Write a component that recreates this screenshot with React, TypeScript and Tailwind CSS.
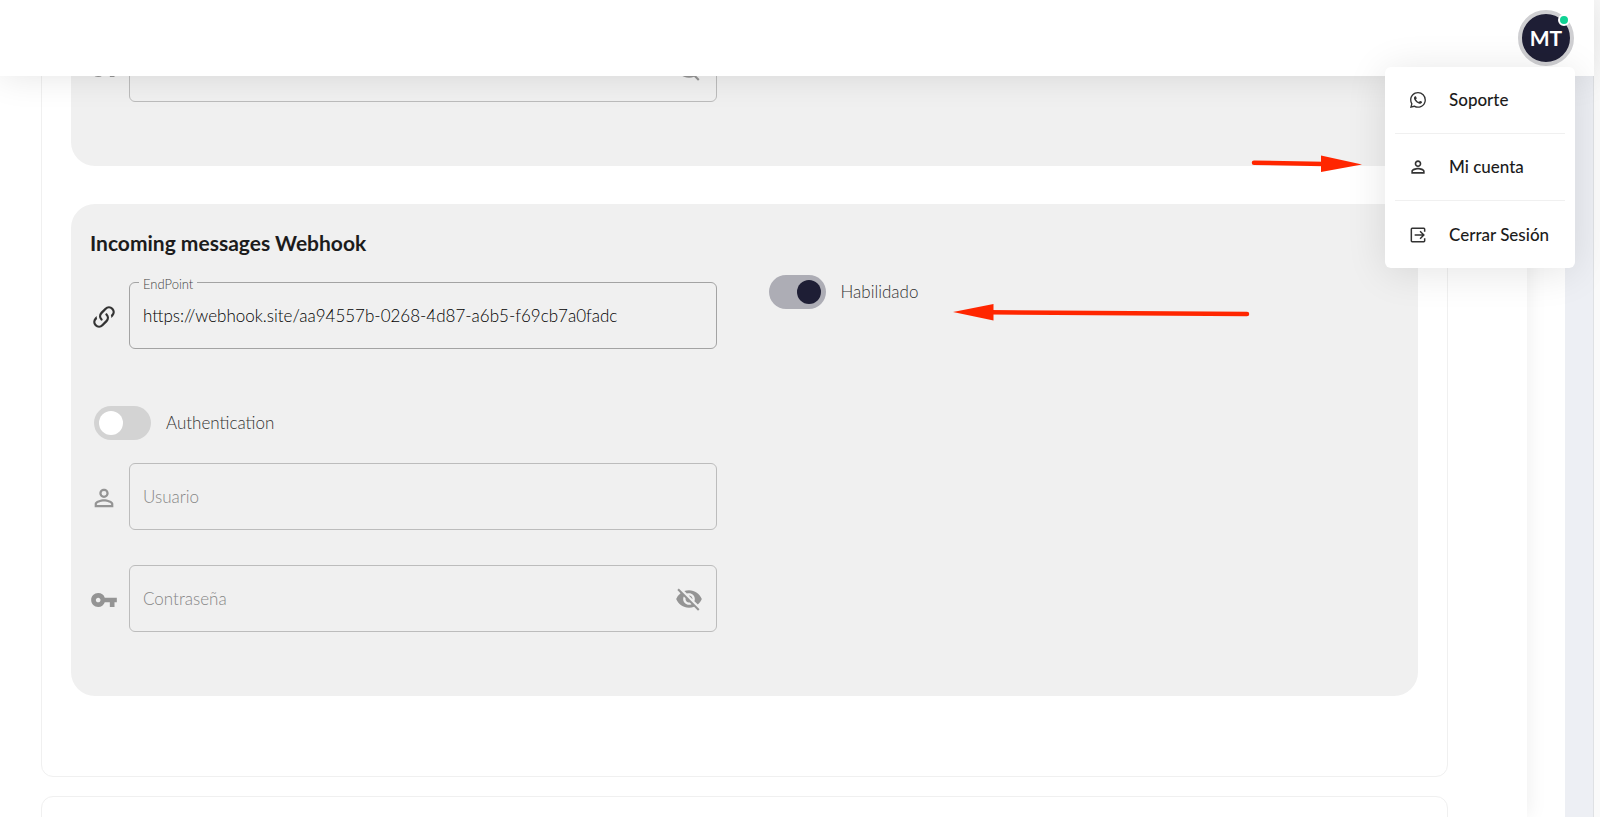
import React, { useState } from 'react';
import { BsWhatsapp } from 'react-icons/bs';
import { MdPersonOutline, MdVisibilityOff, MdVpnKey } from 'react-icons/md';

function LinkIcon({ className }: { className?: string }) {
  return (
    <svg viewBox="0 0 24 24" fill="currentColor" className={className} aria-hidden="true">
      <path d="M10.59 13.41c.41.39.41 1.03 0 1.42-.39.39-1.03.39-1.42 0a5.003 5.003 0 0 1 0-7.07l3.54-3.54a5.003 5.003 0 0 1 7.07 0 5.003 5.003 0 0 1 0 7.07l-1.49 1.49c.01-.82-.12-1.64-.4-2.42l.47-.48a2.982 2.982 0 0 0 0-4.24 2.982 2.982 0 0 0-4.24 0l-3.53 3.53a2.982 2.982 0 0 0 0 4.24m2.82-4.24c.39-.39 1.03-.39 1.42 0a5.003 5.003 0 0 1 0 7.07l-3.54 3.54a5.003 5.003 0 0 1-7.07 0 5.003 5.003 0 0 1 0-7.07l1.49-1.49c-.01.82.12 1.64.4 2.43l-.47.47a2.982 2.982 0 0 0 0 4.24 2.982 2.982 0 0 0 4.24 0l3.53-3.53a2.982 2.982 0 0 0 0-4.24.973.973 0 0 1 0-1.42Z" />
    </svg>
  );
}

function ExitIcon({ className }: { className?: string }) {
  return (
    <svg viewBox="0 0 24 24" fill="none" stroke="currentColor" strokeWidth="1.8" className={className} aria-hidden="true">
      <path d="M20 8V5a1 1 0 0 0-1-1H5a1 1 0 0 0-1 1v14a1 1 0 0 0 1 1h14a1 1 0 0 0 1-1v-3" />
      <path d="M8 12h11M14.500 7.500l4.500 4.500-4.500 4.500" />
    </svg>
  );
}

const MENU = [
  { label: 'Soporte', icon: <BsWhatsapp className="size-4" /> },
  { label: 'Mi cuenta', icon: <MdPersonOutline className="size-5" /> },
  { label: 'Cerrar Sesión', icon: <ExitIcon className="size-5" /> },
];

function Toggle({ label, defaultChecked, className }: { label: string; defaultChecked?: boolean; className?: string }) {
  const [on, setOn] = useState(!!defaultChecked);
  return (
    <label className={`flex w-fit items-center gap-[15px] cursor-pointer ${className ?? ''}`}>
      <input type="checkbox" checked={on} onChange={() => setOn(!on)} className="sr-only peer" />
      <span className="flex h-[34px] w-[57px] items-center rounded-full bg-[#d3d3d3] px-[5px] peer-checked:justify-end peer-checked:bg-[#adadb5]">
        <span className={`size-6 rounded-full ${on ? 'bg-[#1e1e35]' : 'bg-white'}`} />
      </span>
      <span className="text-[17px] leading-6 font-light text-[#333]">{label}</span>
    </label>
  );
}

type FieldProps = {
  id: string;
  label: string;
  icon: React.ReactNode;
  value?: string;
  type?: string;
  muted?: boolean;
};

function Field({ id, label, icon, value, type = 'text', muted }: FieldProps) {
  return (
    <div className="flex items-center">
      <span className={`flex w-[39px] shrink-0 pt-0.5 ${muted ? 'text-[#949494]' : 'text-[#333]'}`}>{icon}</span>
      <div className="relative flex-1">
        {value && (
          <label htmlFor={id} className="absolute -top-2 left-2.5 bg-[#f0f0f0] px-1 text-[13px] leading-5 font-light text-[#444]">
            {label}
          </label>
        )}
        <input
          id={id}
          type={type}
          defaultValue={value}
          placeholder={value ? undefined : label}
          aria-label={label}
          className={`h-[67px] w-full rounded-md border bg-transparent px-[13px] text-[17px] font-light text-black outline-none placeholder:text-[#868686] ${muted ? 'border-[#bcbcbc]' : 'border-[#a3a3a3]'}`}
        />
        {type === 'password' && (
          <button type="button" aria-label="Mostrar" className="absolute inset-y-0 right-3.5 text-[#949494]">
            <MdVisibilityOff className="size-7" />
          </button>
        )}
      </div>
    </div>
  );
}

function Header() {
  return (
    <header className="absolute inset-x-0 top-0 z-10 mr-1.5 flex h-[76px] items-center justify-end bg-white pr-5 shadow-[0_0_36px_rgba(0,0,0,0.11)]">
      <button type="button" className="relative flex size-14 items-center justify-center rounded-full border-4 border-[#cfcfd2] bg-[#1e1e35] font-['Lato'] text-[21px] font-bold text-white">
        MT
        <span className="absolute right-0 top-0 size-3 rounded-full border-2 border-white bg-[#10d294]" />
      </button>
      <nav className="absolute right-[19px] top-[67px] rounded-md bg-white px-2.5 shadow-[0_4px_40px_rgba(0,0,0,0.11)]">
        {MENU.map(({ label, icon }) => (
          <a key={label} href="#" className="flex h-[67px] w-[170px] items-center gap-[21px] border-b border-[#f0f0f0] pl-[13px] text-[17px] font-medium whitespace-nowrap text-[#1c1c1c] last:border-0">
            <span className="flex size-5 shrink-0 items-center justify-center text-[#333]">{icon}</span>
            {label}
          </a>
        ))}
      </nav>
    </header>
  );
}

function Arrows() {
  return (
    <svg className="pointer-events-none absolute right-[230px] top-[150px] z-20 h-[180px] w-[420px]" viewBox="950 150 420 180" aria-hidden="true">
      <g fill="#ff2600" stroke="#ff2600" strokeLinecap="round">
        <path d="M1254 162.800L1324 164" strokeWidth="4.500" />
        <path d="M1321 155.500L1362 164.500L1321 172Z" stroke="none" />
        <path d="M1247 314L990 312.300" strokeWidth="4.500" />
        <path d="M993.500 304L953 312L993.500 320.500Z" stroke="none" />
      </g>
    </svg>
  );
}

export default function App() {
  return (
    <div className="relative h-screen overflow-hidden bg-[#fafafa] font-['Lato',sans-serif] text-[#1c1c1c]">
      <Header />
      <Arrows />
      <div className="mr-1.5 h-full border-r border-[#dfe1e4] bg-[#edeff4] pr-7">
        <div className="h-full bg-white pr-[38px]">
          <main className="h-full bg-white pl-[41px] pr-[79px] shadow-[0_0_20px_rgba(0,0,0,0.08)]">
            <section className="rounded-b-xl border border-[#f0f0f0] px-[29px] pb-20">
              <div className="grid grid-cols-2 rounded-b-3xl bg-[#f0f0f0] pt-[34px] pb-16">
                <div className="pl-[19px] pr-7">
                  <Field id="prev-pass" label="Contraseña" type="password" muted icon={<MdVpnKey className="size-7" />} />
                </div>
              </div>

              <div className="mt-[38px] grid grid-cols-2 rounded-3xl bg-[#f0f0f0] pb-16">
                <div className="pl-[19px] pr-7">
                  <h2 className="mt-6 mb-6 text-[21px] leading-[30px] font-bold">Incoming messages Webhook</h2>
                  <Field id="endpoint" label="EndPoint" value="https://webhook.site/aa94557b-0268-4d87-a6b5-f69cb7a0fadc" icon={<LinkIcon className="size-7" />} />
                  <Toggle label="Authentication" className="mt-[57px] mb-[23px] ml-1" />
                  <Field id="user" label="Usuario" muted icon={<MdPersonOutline className="size-7" />} />
                  <div className="h-[35px]" />
                  <Field id="pass" label="Contraseña" type="password" muted icon={<MdVpnKey className="size-7" />} />
                </div>
                <div className="pl-6 pt-[71px]">
                  <Toggle label="Habilidado" defaultChecked />
                </div>
              </div>
            </section>

            <section className="mt-[19px] h-24 rounded-t-xl border border-[#f0f0f0]" />
          </main>
        </div>
      </div>
    </div>
  );
}
